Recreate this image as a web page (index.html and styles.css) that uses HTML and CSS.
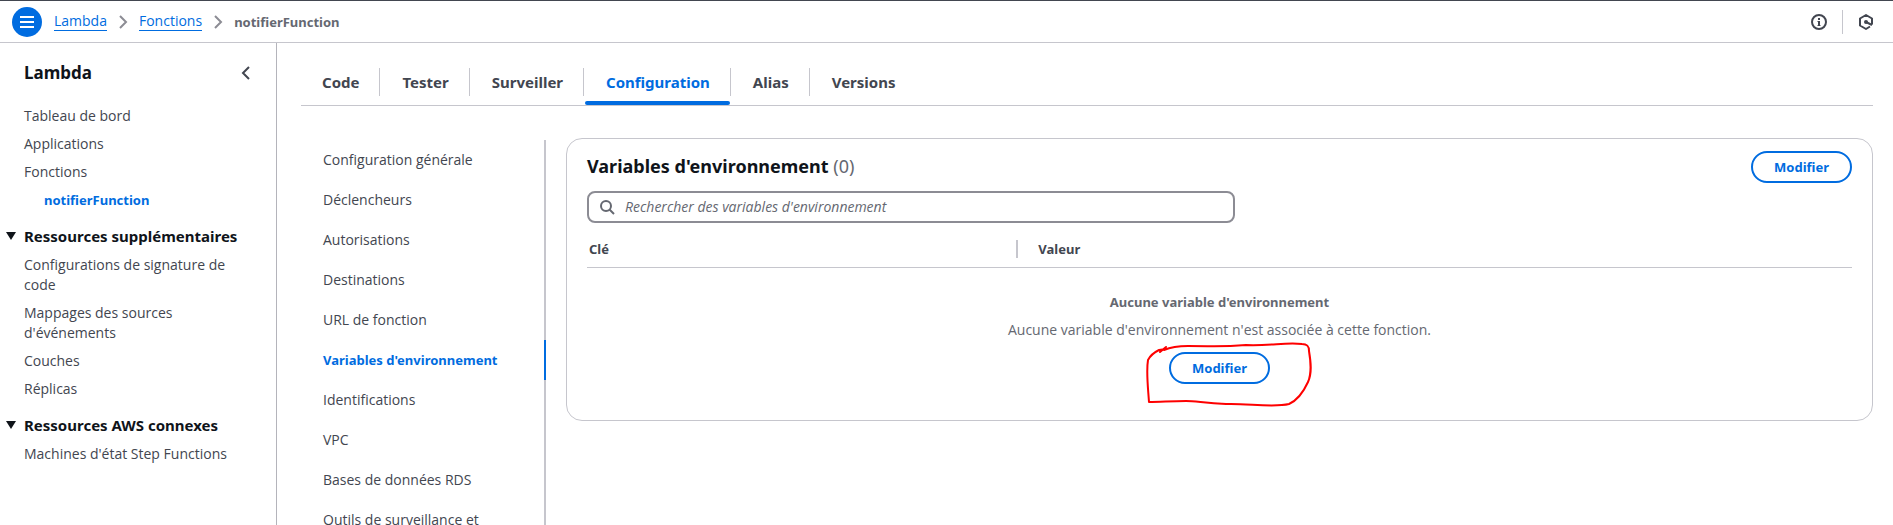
FILE: index.html
```html
<!DOCTYPE html>
<html lang="fr">
<head>
<meta charset="utf-8">
<title>notifierFunction - Lambda</title>
<link rel="stylesheet" href="styles.css">
</head>
<body>
<header class="topbar">
  <button class="menu-button" aria-label="Ouvrir la navigation">
    <svg width="30" height="30" viewBox="0 0 30 30" fill="none" stroke="#fff" stroke-width="2"><path d="M8 10h14M8 15h14M8 20h14"/></svg>
  </button>
  <nav class="breadcrumbs" aria-label="Fil d'Ariane">
    <a href="#">Lambda</a>
    <svg class="crumb-arrow" width="16" height="16" viewBox="0 0 16 16"><path d="M5 2l6 6-6 6"/></svg>
    <a href="#">Fonctions</a>
    <svg class="crumb-arrow" width="16" height="16" viewBox="0 0 16 16"><path d="M5 2l6 6-6 6"/></svg>
    <span class="crumb-current">notifierFunction</span>
  </nav>
  <div class="tools">
    <button class="icon-button" aria-label="Informations">
      <svg width="16" height="16" viewBox="0 0 16 16" fill="none" stroke="#424650" stroke-width="2"><circle cx="8" cy="8" r="7"/><path d="M8 4v2M8 7v5"/><path d="M6.500 7.500H8M6.500 11.500h3" stroke-width="1"/></svg>
    </button>
    <span class="tools-divider"></span>
    <button class="icon-button" aria-label="Outils">
      <svg width="16" height="16" viewBox="0 0 16 16" fill="none" stroke="#424650" stroke-width="2"><path d="M12 12.500L8 15l-6-3.500v-7L8 1l6 3.500v6" stroke-linejoin="round"/><circle cx="8" cy="8" r="2" fill="#424650" stroke="none"/><path d="M8 8l6 3"/></svg>
    </button>
  </div>
</header>
<div class="layout">
  <aside class="sidebar">
    <div class="sidebar-header">
      <h2>Lambda</h2>
      <button class="icon-button" aria-label="Fermer la navigation">
        <svg width="16" height="16" viewBox="0 0 16 16" fill="none" stroke="#424650" stroke-width="2"><path d="M13 2L7 8l6 6"/></svg>
      </button>
    </div>
    <ul class="side-list">
      <li><a href="#">Tableau de bord</a></li>
      <li><a href="#">Applications</a></li>
      <li><a href="#">Fonctions</a></li>
      <li class="nested"><a class="active" href="#">notifierFunction</a></li>
    </ul>
    <h3><svg width="10" height="8" viewBox="0 0 10 8"><path d="M0 0h10L5 8z" fill="#0f141a"/></svg>Ressources supplémentaires</h3>
    <ul class="side-list">
      <li><a href="#">Configurations de signature de code</a></li>
      <li><a href="#">Mappages des sources d'événements</a></li>
      <li><a href="#">Couches</a></li>
      <li><a href="#">Réplicas</a></li>
    </ul>
    <h3><svg width="10" height="8" viewBox="0 0 10 8"><path d="M0 0h10L5 8z" fill="#0f141a"/></svg>Ressources AWS connexes</h3>
    <ul class="side-list">
      <li><a href="#">Machines d'état Step Functions</a></li>
    </ul>
  </aside>
  <main class="main">
    <div class="tabs" role="tablist">
      <button class="tab" role="tab">Code</button>
      <button class="tab" role="tab">Tester</button>
      <button class="tab" role="tab">Surveiller</button>
      <button class="tab selected" role="tab" aria-selected="true">Configuration</button>
      <button class="tab" role="tab">Alias</button>
      <button class="tab" role="tab">Versions</button>
    </div>
    <div class="panel">
      <nav class="config-nav" aria-label="Configuration">
        <a href="#">Configuration générale</a>
        <a href="#">Déclencheurs</a>
        <a href="#">Autorisations</a>
        <a href="#">Destinations</a>
        <a href="#">URL de fonction</a>
        <a class="active" href="#">Variables d'environnement</a>
        <a href="#">Identifications</a>
        <a href="#">VPC</a>
        <a href="#">Bases de données RDS</a>
        <a href="#">Outils de surveillance et</a>
      </nav>
      <section class="card">
        <div class="card-header">
          <h1>Variables d'environnement <span class="count">(0)</span></h1>
          <button class="button">Modifier</button>
        </div>
        <label class="search">
          <svg width="16" height="16" viewBox="0 0 16 16" fill="none" stroke="#656871" stroke-width="2"><circle cx="7" cy="7" r="5"/><path d="M10.500 10.500L15 15"/></svg>
          <input type="search" aria-label="Rechercher des variables d'environnement" placeholder="Rechercher des variables d'environnement">
        </label>
        <table class="table">
          <thead><tr><th class="key"><div>Clé</div></th><th class="value"><div>Valeur</div></th></tr></thead>
          <tbody><tr><td colspan="2">
            <div class="empty">
              <b>Aucune variable d'environnement</b>
              <p>Aucune variable d'environnement n'est associée à cette fonction.</p>
              <div class="marked">
                <button class="button">Modifier</button>
                <svg class="scribble" width="168" height="68" viewBox="0 0 168 68" fill="none" stroke="#fe0000" stroke-width="2" stroke-linecap="round" stroke-linejoin="round"><path d="M14 10L20 5L18 8C25 5 30 4 42 4C70 4 75 5 100 3C125 4 140 0 156 2C162 2 163 5 163 9C165 21 166 31 162 40C157 51 152 58 143 62C127 66 100 61 80 62C58 61 50 59 40 59C25 59 15 60 3 60C2 45 0 30 2 18C5 12 9 10 13 8L20 7"/></svg>
              </div>
            </div>
          </td></tr></tbody>
        </table>
      </section>
    </div>
  </main>
</div>
</body>
</html>
```
FILE: styles.css
```css
* { box-sizing: border-box; }
body {
  margin: 0;
  font-family: "Open Sans", "Noto Sans", sans-serif;
  font-size: 14px;
  line-height: 20px;
  color: #424650;
  background: #fff;
  height: 100vh;
  overflow: hidden;
  display: flex;
  flex-direction: column;
}
h1, h2, h3, p, ul { margin: 0; padding: 0; }
ul { list-style: none; }
a { color: inherit; text-decoration: none; }
svg { display: block; flex: none; }
button { font: inherit; cursor: pointer; }

/* Emphasised text */
h1, h2, h3, b, th, .active, .button, .tab, .crumb-current {
  font-family: "Noto Sans", "Open Sans", sans-serif;
  font-size: 13px;
  font-weight: 700;
}

.topbar {
  flex: none;
  display: flex;
  align-items: center;
  height: 43px;
  padding: 0 19px 0 12px;
  border-top: 1px solid #424650;
  border-bottom: 1px solid #c6c6cd;
}
.menu-button { padding: 0; border: 0; border-radius: 50%; background: #006ce0; }
.icon-button { padding: 0; border: 0; background: none; }
.breadcrumbs { display: flex; align-items: center; gap: 8px; margin-left: 12px; }
.breadcrumbs a { color: #006ce0; border-bottom: 1px solid #006ce0; line-height: 18px; }
.crumb-arrow { fill: none; stroke: #8c8c94; stroke-width: 2; }
.crumb-current { color: #656871; }
.tools { display: flex; align-items: center; gap: 15px; margin-left: auto; }
.tools-divider { width: 1px; height: 24px; background: #c6c6cd; }

.layout { display: flex; flex: 1; min-height: 0; }
.sidebar {
  flex: none;
  width: 277px;
  padding: 17px 24px 0;
  border-right: 1px solid #b4b4bb;
}
.sidebar-header { display: flex; justify-content: space-between; align-items: center; height: 26px; margin-bottom: 20px; }
.sidebar h2 { font-size: 17px; color: #0f141a; }
.side-list { display: flex; flex-direction: column; gap: 8px; }
.side-list li { height: auto; padding-right: 16px; }
.side-list a { display: block; }
.side-list .nested { padding-left: 20px; }
.active { color: #006ce0; }
.sidebar h3 {
  display: flex;
  align-items: center;
  gap: 8px;
  margin: 16px 0 9px -18px;
  font-size: 15px;
  line-height: 20px;
  white-space: nowrap;
  color: #0f141a;
}

.main { flex: 1; min-width: 0; padding: 20px 20px 0 24px; }
.tabs { display: flex; border-bottom: 1px solid #c6c6cd; }
.tab {
  position: relative;
  height: 42px;
  padding: 0 21px 4px 22px;
  border: 0;
  background: none;
  color: #424650;
  font-size: 15px;
}
.tab:first-child { padding-left: 21px; }
.tab:not(:last-child)::before {
  content: "";
  position: absolute;
  right: 0;
  top: 5px;
  width: 1px;
  height: 28px;
  background: #c6c6cd;
}
.tab.selected { color: #006ce0; }
.tab.selected::after {
  content: "";
  position: absolute;
  left: 1px;
  right: 1px;
  bottom: 0;
  height: 4px;
  border-radius: 2px;
  background: #006ce0;
}
.panel { display: flex; align-items: flex-start; gap: 20px; padding-top: 32px; }
.config-nav { flex: none; display: flex; flex-direction: column; width: 245px; margin-top: 2px; }
.config-nav a { padding: 10px 36px 10px 22px; border-right: 2px solid #c6c6cd; }
.config-nav .active { border-color: #006ce0; }
.card {
  flex: 1;
  min-width: 0;
  padding: 12px 20px 36px;
  border: 1px solid #c6c6cd;
  border-radius: 16px;
}
.card-header { display: flex; justify-content: space-between; align-items: flex-start; margin-bottom: 8px; }
.card h1 { font-size: 18px; line-height: 30px; color: #0f141a; }
.count { font-weight: 400; color: #656871; }
.button {
  height: 32px;
  padding: 0 21px;
  border: 2px solid #006ce0;
  border-radius: 20px;
  background: #fff;
  color: #006ce0;
}
.search {
  display: flex;
  align-items: center;
  gap: 10px;
  width: 51.25%;
  height: 32px;
  padding: 0 10px;
  border: 2px solid #8c8c94;
  border-radius: 8px;
}
.search input { flex: 1; min-width: 0; padding: 0; border: 0; outline: 0; background: none; font: inherit; color: #0f141a; }
.search input::placeholder { color: #656871; font-style: italic; opacity: 1; }
.table { width: 100%; margin-top: 8px; border-collapse: separate; border-spacing: 0; table-layout: fixed; }
.table th { height: 37px; padding: 0; border-bottom: 1px solid #c6c6cd; text-align: left; }
.table th div { line-height: 18px; padding-left: 2px; }
.key { width: 34.1%; }
.table .key div { border-right: 2px solid #c6c6cd; }
.table .value div { padding-left: 20px; }
.table td { padding: 24px 0 0; }
.empty { display: flex; flex-direction: column; align-items: center; gap: 8px; color: #656871; }
.marked { position: relative; margin-top: 4px; }
.scribble { position: absolute; left: -23px; top: -10px; pointer-events: none; }
```
